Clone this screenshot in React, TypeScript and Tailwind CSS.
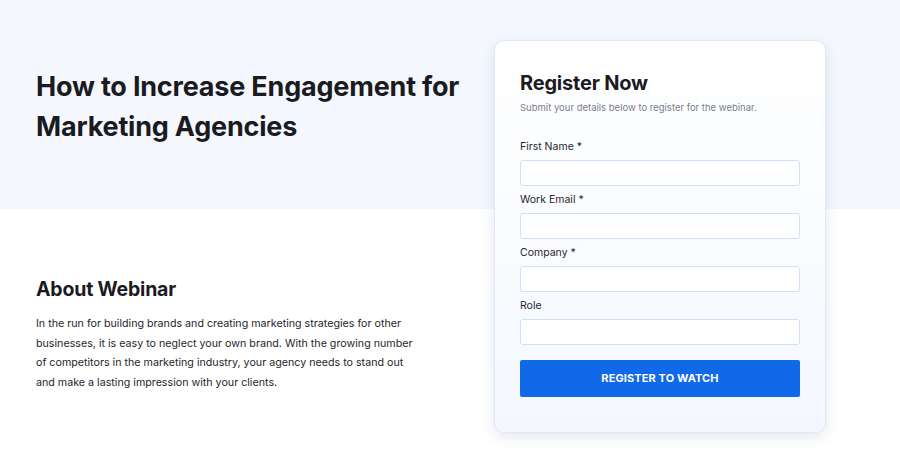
const fields = [
  { label: 'First Name *', name: 'firstName' },
  { label: 'Work Email *', name: 'email' },
  { label: 'Company *', name: 'company' },
  { label: 'Role', name: 'role' },
];

export default function App() {
  return (
    <div className="relative min-h-[457px] w-[900px] bg-white font-['Inter',sans-serif] text-[#1b1b1f]">
      {/* top band */}
      <div className="h-[209px] bg-[#f4f8fe]">
        <div className="pl-[36px] pt-[67px]">
          <h1 className="text-[27px] font-bold leading-[40px] tracking-[-0.2px]">
            How to Increase Engagement for
            <br />
            Marketing Agencies
          </h1>
        </div>
      </div>

      <div className="pl-[36px] pt-[67px]">
        <h2 className="text-[19.5px] font-bold leading-[26px] tracking-[-0.2px]">About Webinar</h2>
        <p className="mt-[12px] text-[10.7px] leading-[19.5px] text-[#26262b]">
          In the run for building brands and creating marketing strategies for other
          <br />
          businesses, it is easy to neglect your own brand. With the growing number
          <br />
          of competitors in the marketing industry, your agency needs to stand out
          <br />
          and make a lasting impression with your clients.
        </p>
      </div>

      {/* register card */}
      <div className="absolute left-[494px] top-[40px] w-[332px] rounded-[10px] border border-[#dfe8f5] bg-gradient-to-b from-white to-[#f4f8fe] px-[25px] pb-[35px] pt-[28px] shadow-[0_4px_14px_rgba(30,60,120,0.12)]">
        <h3 className="text-[20px] font-bold leading-[28px] tracking-[-0.2px]">Register Now</h3>
        <p className="mt-[4px] text-[9.5px] leading-[14px] text-[#7a7f8a]">
          Submit your details below to register for the webinar.
        </p>
        <form className="mt-[25px] flex flex-col gap-[7px]">
          {fields.map((f) => (
            <div key={f.name}>
              <label className="mb-[6px] block text-[10.5px] leading-[14px] text-[#26262b]">{f.label}</label>
              <input
                name={f.name}
                className="block h-[26px] w-full rounded-[3px] border border-[#cfe0fb] bg-white px-2 text-[11px] outline-none"
              />
            </div>
          ))}
          <button
            type="button"
            className="mt-[8px] h-[37px] w-full rounded-[2px] bg-[#0f69e9] text-[11px] font-bold uppercase tracking-[0.1px] text-white"
          >
            Register to Watch
          </button>
        </form>
      </div>
    </div>
  );
}
